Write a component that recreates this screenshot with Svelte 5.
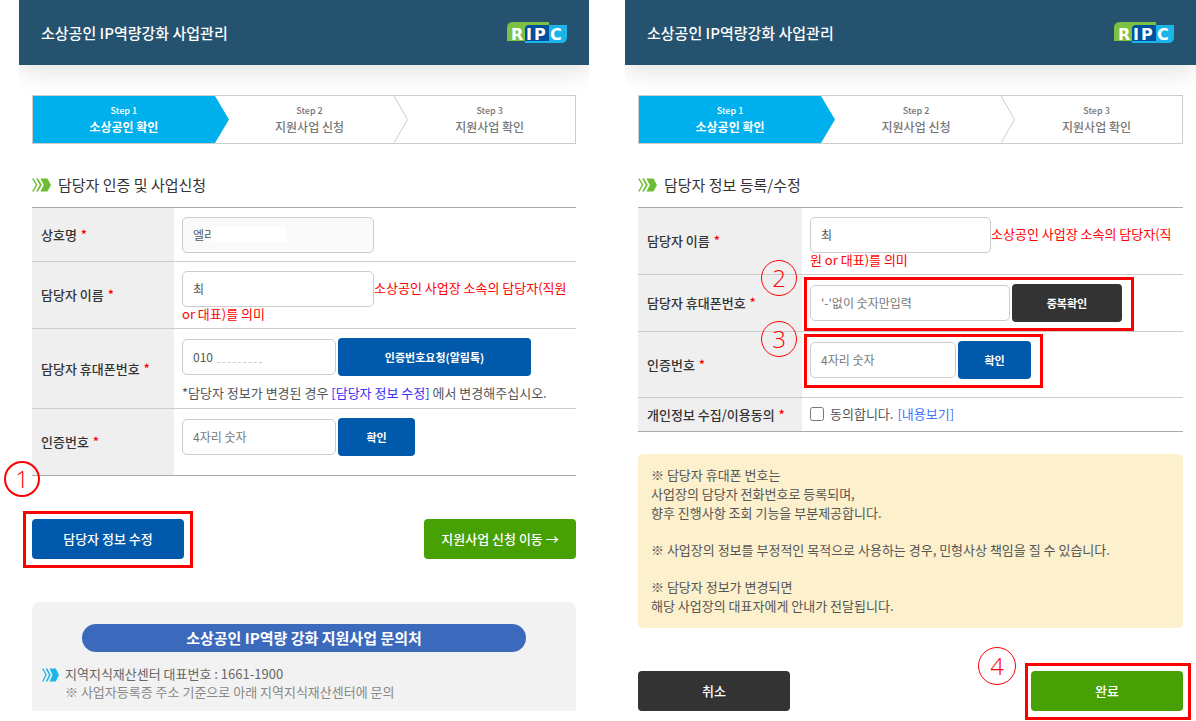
<script lang="ts">
	const steps = [
		{ no: 'Step 1', name: '소상공인 확인' },
		{ no: 'Step 2', name: '지원사업 신청' },
		{ no: 'Step 3', name: '지원사업 확인' }
	];

	let companyName = $state('엘리');
	let managerName = $state('최');
	let phone = $state('010');
	let authCode = $state('');

	let editName = $state('최');
	let editPhone = $state('');
	let editCode = $state('');
	let agreed = $state(false);
</script>

{#snippet header()}
	<header class="header">
		<h1 class="header__title">소상공인 IP역량강화 사업관리</h1>
		<svg class="header__logo" width="62" height="23" viewBox="0 0 62 23" role="img" aria-label="RIPC">
			<path d="M1 20V7Q1 1 7 1H43V20Z" fill="#7cc142" />
			<path d="M19 19H43V4H61V16Q61 22 55 22H19Z" fill="#1cb5ea" />
			<path d="M19 20V8Q19 4 23 4H43V20Z" fill="#00509e" />
			<text x="5 20 28 44" y="19" fill="#fff">RIPC</text>
		</svg>
	</header>
{/snippet}

{#snippet stepBar()}
	<ol class="steps">
		{#each steps as step, index}
			<li class="steps__item" class:steps__item--active={index === 0}>
				<span class="steps__no">{step.no}</span>
				<span class="steps__name">{step.name}</span>
				{#if index < 2}
					<svg class="steps__arrow" viewBox="0 0 14 47" preserveAspectRatio="none" aria-hidden="true">
						{#if index === 0}
							<path d="M0 0L14 23.5L0 47Z" fill="#00b0ec" />
						{:else}
							<path d="M0 0L13.5 23.5L0 47" fill="none" stroke="#ccc" />
						{/if}
					</svg>
				{/if}
			</li>
		{/each}
	</ol>
{/snippet}

{#snippet chevrons(color: string, width: number)}
	<svg {width} height="14" viewBox="0 0 19 14" preserveAspectRatio="none" fill={color} aria-hidden="true">
		<path d="M0 0.5H1.6L5.4 7L1.6 13.5H0L3.8 7Z" />
		<path d="M4 0.5H6L9.8 7L6 13.5H4L7.8 7Z" />
		<path d="M8.4 0.5H15.4L19 7L15.4 13.5H8.4L11.8 7Z" />
	</svg>
{/snippet}

{#snippet required()}
	<span class="required">*</span>
{/snippet}

<main class="page">
	<section class="panel">
		{@render header()}
		<div class="panel__body">
			{@render stepBar()}
			<h2 class="heading">{@render chevrons('#6dbd32', 19)}담당자 인증 및 사업신청</h2>

			<table class="form">
				<tbody>
					<tr class="row--short">
						<th scope="row"><label for="company">상호명 {@render required()}</label></th>
						<td>
							<div class="field">
								<input id="company" class="input input--name" type="text" bind:value={companyName} readonly />
								<span class="mask mask--company"></span>
							</div>
						</td>
					</tr>
					<tr class="row--tall">
						<th scope="row"><label for="manager">담당자 이름 {@render required()}</label></th>
						<td class="hint"><input id="manager" class="input input--name" type="text" bind:value={managerName} />소상공인 사업장 소속의 담당자(직원 or 대표)를 의미</td>
					</tr>
					<tr class="row--note">
						<th scope="row"><label for="phone">담당자 휴대폰번호 {@render required()}</label></th>
						<td>
							<div class="field">
								<input id="phone" class="input input--code" type="text" bind:value={phone} />
								<span class="mask mask--phone"></span>
								<button class="btn btn--request" type="button">인증번호요청(알림톡)</button>
							</div>
							<p class="note">*담당자 정보가 변경된 경우 <a class="note__link" href="#edit">[담당자 정보 수정]</a> 에서 변경해주십시오.</p>
						</td>
					</tr>
					<tr class="row--tall">
						<th scope="row"><label for="code">인증번호 {@render required()}</label></th>
						<td>
							<div class="field">
								<input id="code" class="input input--code" type="text" placeholder="4자리 숫자" bind:value={authCode} />
								<button class="btn btn--confirm" type="button">확인</button>
							</div>
						</td>
					</tr>
				</tbody>
			</table>

			<div class="actions">
				<div class="marked marked--edit">
					<button class="btn btn--large" type="button">담당자 정보 수정</button>
					<span class="badge">1</span>
				</div>
				<button class="btn btn--large btn--green" type="button">지원사업 신청 이동 →</button>
			</div>

			<div class="contact">
				<h3 class="contact__title">소상공인 IP역량 강화 지원사업 문의처</h3>
				<div class="contact__row">
					{@render chevrons('#1cb5ea', 17)}
					<div>
						<p>지역지식재산센터 대표번호 : 1661-1900</p>
						<p class="contact__sub">※ 사업자등록증 주소 기준으로 아래 지역지식재산센터에 문의</p>
					</div>
				</div>
			</div>
		</div>
	</section>

	<section class="panel" id="edit">
		{@render header()}
		<div class="panel__body">
			{@render stepBar()}
			<h2 class="heading">{@render chevrons('#6dbd32', 19)}담당자 정보 등록/수정</h2>

			<table class="form form--edit">
				<tbody>
					<tr class="row--tall">
						<th scope="row"><label for="edit-name">담당자 이름 {@render required()}</label></th>
						<td class="hint"><input id="edit-name" class="input input--edit-name" type="text" bind:value={editName} />소상공인 사업장 소속의 담당자(직원 or 대표)를 의미</td>
					</tr>
					<tr class="row--phone">
						<th scope="row"><label for="edit-phone">담당자 휴대폰번호 {@render required()}</label></th>
						<td>
							<div class="field marked marked--phone">
								<input id="edit-phone" class="input input--edit-phone" type="text" placeholder="'-'없이 숫자만입력" bind:value={editPhone} />
								<button class="btn btn--check" type="button">중복확인</button>
								<span class="badge">2</span>
							</div>
						</td>
					</tr>
					<tr class="row--code">
						<th scope="row"><label for="edit-code">인증번호 {@render required()}</label></th>
						<td>
							<div class="field marked marked--code">
								<input id="edit-code" class="input input--edit-code" type="text" placeholder="4자리 숫자" bind:value={editCode} />
								<button class="btn btn--edit-confirm" type="button">확인</button>
								<span class="badge">3</span>
							</div>
						</td>
					</tr>
					<tr class="row--agree">
						<th scope="row">개인정보 수집/이용동의 {@render required()}</th>
						<td>
							<div class="agree">
								<input id="agree" type="checkbox" bind:checked={agreed} />
								<label for="agree">동의합니다.</label>
								<a href="#terms">[내용보기]</a>
							</div>
						</td>
					</tr>
				</tbody>
			</table>

			<div class="notice">
				<p>※ 담당자 휴대폰 번호는<br />사업장의 담당자 전화번호로 등록되며,<br />향후 진행사항 조회 기능을 부분제공합니다.</p>
				<p>※ 사업장의 정보를 부정적인 목적으로 사용하는 경우, 민형사상 책임을 질 수 있습니다.</p>
				<p>※ 담당자 정보가 변경되면<br />해당 사업장의 대표자에게 안내가 전달됩니다.</p>
			</div>

			<div class="actions">
				<button class="btn btn--large btn--dark" type="button">취소</button>
				<div class="marked marked--done">
					<button class="btn btn--large btn--green" type="button">완료</button>
					<span class="badge">4</span>
				</div>
			</div>
		</div>
	</section>
</main>

<style>
	:global(body) {
		background: #fff;
	}

	.page,
	.page * {
		box-sizing: border-box;
	}

	.page {
		display: grid;
		grid-template-columns: 570fr 571fr;
		gap: 36px;
		padding-left: 19px;
		font-family: 'Noto Sans CJK KR', 'Noto Sans', sans-serif;
		font-size: 13px;
		color: #555;
	}

	.page p,
	.page h1,
	.page h2,
	.page h3 {
		margin: 0;
	}

	.page input,
	.page button {
		font-family: inherit;
	}

	.panel__body {
		padding: 30px 13px 9px;
	}

	.header {
		display: flex;
		align-items: center;
		justify-content: space-between;
		height: 65px;
		padding: 0 21px 0 22px;
		background: #24526f;
		box-shadow: 0 6px 26px rgba(0, 0, 0, 0.12);
		clip-path: inset(0 0 -40px 0);
	}

	.header__title {
		font-size: 15px;
		font-weight: 500;
		color: #fff;
	}

	.header__logo text {
		font: bold 16px 'DejaVu Sans', sans-serif;
	}

	.steps {
		display: grid;
		grid-template-columns: 182fr 180fr 181fr;
		height: 49px;
		margin: 0;
		padding: 0;
		list-style: none;
		border: 1px solid #ccc;
		background: #fff;
	}

	.steps__item {
		position: relative;
		display: flex;
		flex-direction: column;
		align-items: center;
		justify-content: center;
		padding-left: 10px;
		color: #777;
	}

	.steps__item--active {
		padding-left: 0;
		background: #00b0ec;
		color: #fff;
	}

	.steps__no {
		font-size: 9px;
		font-weight: 500;
		line-height: 14px;
	}

	.steps__name {
		font-size: 12px;
		font-weight: 500;
		line-height: 17px;
	}

	.steps__item--active .steps__name {
		font-weight: 700;
	}

	.steps__arrow {
		position: absolute;
		top: 0;
		left: 100%;
		width: 14px;
		height: 100%;
		z-index: 1;
	}

	.heading {
		display: flex;
		align-items: center;
		gap: 7px;
		padding: 29px 0 10px;
		font-size: 15px;
		font-weight: 400;
		line-height: 24px;
		color: #333;
	}

	.form {
		width: 100%;
		table-layout: fixed;
		border-collapse: collapse;
		border-top: 1px solid #aaa;
		border-bottom: 1px solid #aaa;
	}

	.form tr + tr {
		border-top: 1px solid #ccc;
	}

	.form th {
		width: 142px;
		padding: 0 0 0 9px;
		background: #efefef;
		font-weight: 500;
		text-align: left;
		line-height: 18px;
		color: #333;
	}

	.form--edit th {
		width: 164px;
	}

	.form td {
		padding: 9px 3px 0 8px;
		vertical-align: top;
	}

	.row--short {
		height: 54px;
	}

	.row--tall {
		height: 67px;
	}

	.row--note {
		height: 80px;
	}

	.row--phone {
		height: 57px;
	}

	.row--code {
		height: 66px;
	}

	.row--agree {
		height: 34px;
	}

	.required {
		margin-left: 1px;
		color: #f00;
	}

	.field {
		position: relative;
		display: flex;
		align-items: center;
		gap: 2px;
	}

	.input {
		height: 36px;
		padding: 0 10px 1px;
		border: 1px solid #ccc;
		border-radius: 5px;
		background: #fff;
		font-size: 12px;
		color: #555;
		outline: none;
	}

	.input::placeholder {
		color: #777;
		opacity: 1;
	}

	.input:read-only {
		background: #fafafa;
	}

	.input--name {
		width: 192px;
	}

	.input--code {
		width: 154px;
	}

	.input--edit-name {
		width: 181px;
	}

	.input--edit-phone {
		width: 200px;
	}

	.input--edit-code {
		width: 146px;
	}

	.mask {
		position: absolute;
		background: #fff;
	}

	.mask--company {
		left: 29px;
		top: 10px;
		width: 75px;
		height: 15px;
	}

	.mask--phone {
		left: 35px;
		top: 12px;
		width: 45px;
		height: 13px;
		border-bottom: 1px dashed #ccc;
	}

	.form .hint {
		line-height: 14px;
		color: #f00;
	}

	.hint .input {
		vertical-align: middle;
	}

	.note {
		padding-top: 8px;
		line-height: 18px;
	}

	.note__link {
		color: #3a2cf5;
		text-decoration: none;
	}

	.btn {
		height: 38px;
		padding: 0 0 1px;
		border: 0;
		border-radius: 4px;
		background: #0059ab;
		font-size: 11px;
		font-weight: 700;
		color: #fff;
		cursor: pointer;
	}

	.btn--request {
		width: 193px;
	}

	.btn--confirm {
		width: 77px;
	}

	.btn--edit-confirm {
		width: 73px;
	}

	.btn--check {
		width: 110px;
		background: #333;
	}

	.btn--large {
		display: block;
		width: 152px;
		height: 40px;
		font-size: 13px;
		font-weight: 500;
	}

	.btn--green {
		background: #48a104;
	}

	.btn--dark {
		background: #333;
	}

	.actions {
		display: flex;
		justify-content: space-between;
		margin-top: 43px;
	}

	/* red guide frames and numbers over the form */
	.marked {
		position: relative;
		width: fit-content;
	}

	.marked::before {
		content: '';
		position: absolute;
		inset: -7px -12px -9px -6px;
		border: 3px solid #f00;
		pointer-events: none;
	}

	.marked--edit::before {
		inset: -8px -9px -9px;
	}

	.marked--done::before {
		inset: -8px -8px -9px -6px;
	}

	.badge {
		position: absolute;
		top: -24px;
		left: -49px;
		display: flex;
		align-items: center;
		justify-content: center;
		width: 36px;
		height: 36px;
		border: 1px solid #f00;
		border-radius: 50%;
		font-family: 'Open Sans', 'Noto Sans', sans-serif;
		font-size: 24px;
		font-weight: 300;
		line-height: 24px;
		color: #f00;
	}

	.marked--edit .badge {
		top: -58px;
		left: -28px;
		border-width: 2px;
	}

	.marked--code .badge {
		top: -20px;
	}

	.marked--done .badge {
		left: -53px;
		width: 38px;
		height: 38px;
	}

	.agree {
		display: flex;
		align-items: center;
		line-height: 18px;
	}

	.agree input {
		width: 14px;
		height: 14px;
		margin: 0 6px 0 0;
	}

	.agree a {
		margin-left: 4px;
		color: #3f74ff;
		text-decoration: none;
	}

	.form .row--agree td {
		padding-top: 7px;
	}

	.notice {
		display: flex;
		flex-direction: column;
		gap: 18px;
		margin-top: 22px;
		padding: 11px 13px 13px;
		border-radius: 5px;
		background: #fcf0cd;
		line-height: 19px;
	}

	.contact {
		margin-top: 43px;
		padding: 22px 10px 10px;
		border-radius: 8px 8px 0 0;
		background: #f2f2f2;
	}

	.page .contact__title {
		margin: 0 40px 13px;
		border-radius: 14px;
		background: #3b6abd;
		font-size: 15px;
		font-weight: 700;
		line-height: 28px;
		text-align: center;
		color: #fff;
	}

	.contact__row {
		display: flex;
		gap: 6px;
		line-height: 18px;
		color: #666;
	}

	.contact__row :global(svg) {
		flex: none;
		margin-top: 3px;
	}

	.contact__sub {
		color: #888;
	}
</style>
